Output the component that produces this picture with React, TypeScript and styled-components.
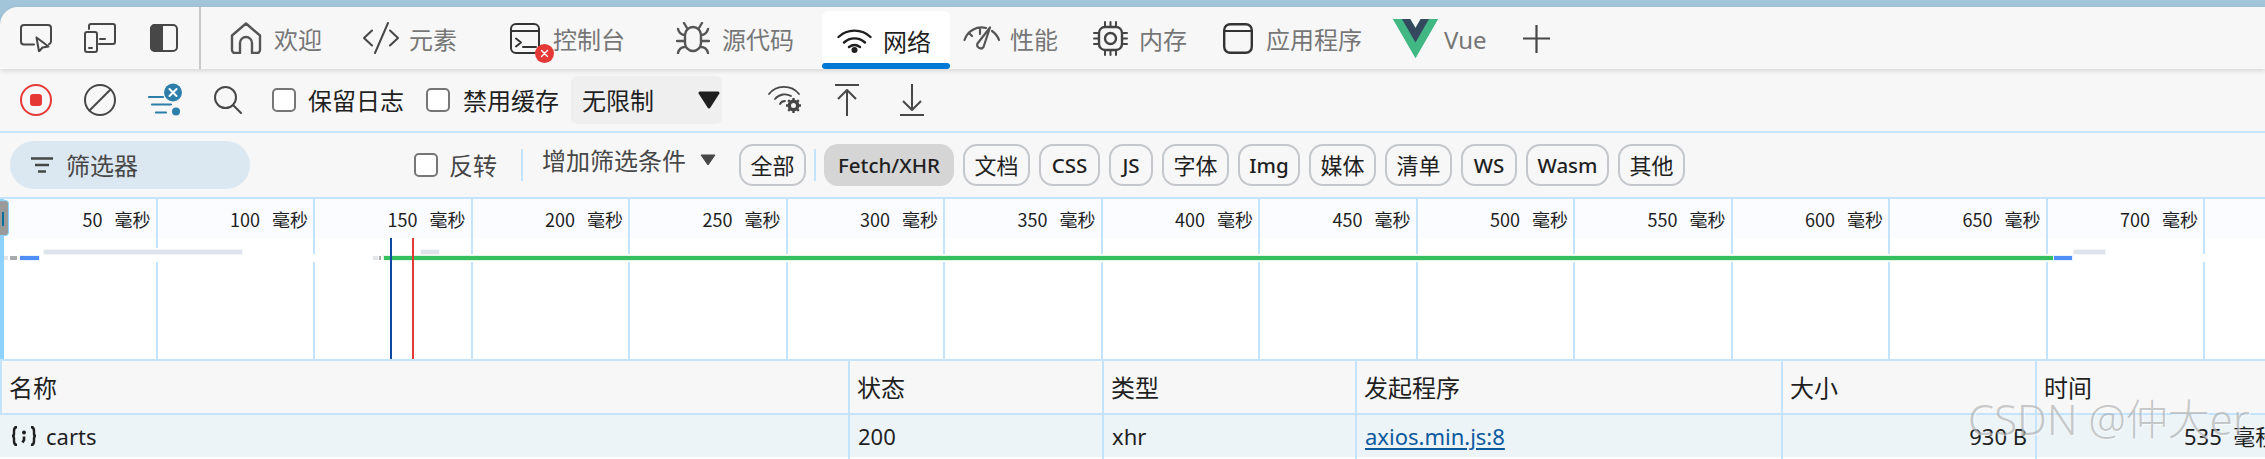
import React from "react";
import styled, { createGlobalStyle } from "styled-components";

const Global = createGlobalStyle`
  html, body { margin: 0; padding: 0; background: #ffffff; }
  body { font-family: "Noto Sans", "Noto Sans CJK SC", sans-serif; overflow: hidden; }
  * { box-sizing: border-box; }
`;

const LINE = "#c4e4fd";

const Page = styled.div`
  position: relative; width: 2265px; height: 459px; overflow: hidden;
  background: #ffffff;
`;
const TopStrip = styled.div`background: #a3c5da; padding-top: 7px; height: 69px;`;
const TabBar = styled.div`
  position: relative; z-index: 2; display: flex; align-items: stretch; height: 62px;
  background: #f7f7f7; border-top-left-radius: 18px;
  box-shadow: 0 2px 5px rgba(0,0,0,.13);
`;
const DeviceTools = styled.div`
  display: flex; align-items: center; width: 201px; padding-left: 20px;
  border-right: 2px solid #c8c8c8;
`;
const IconSlot = styled.span<{ $ml?: number }>`
  display: block; flex: none; line-height: 0; margin-left: ${p => p.$ml ?? 0}px;
  position: relative;
`;
const Tab = styled.div<{ $w: number; $pl: number; $gap: number; $active?: boolean }>`
  position: relative; display: flex; align-items: center; flex: none;
  width: ${p => p.$w}px; padding-left: ${p => p.$pl}px; gap: ${p => p.$gap}px;
  height: ${p => (p.$active ? "58px" : "62px")};
  margin-top: ${p => (p.$active ? "4px" : "0")};
  background: ${p => (p.$active ? "#ffffff" : "transparent")};
  border-radius: ${p => (p.$active ? "6px 6px 0 0" : "0")};
`;
const TabLabel = styled.span<{ $active?: boolean }>`
  font: 400 24px/1 "Noto Sans", "Noto Sans CJK SC", sans-serif;
  color: ${p => (p.$active ? "#1f1f1f" : "#767676")}; white-space: nowrap;
  position: relative; top: 2px;
`;
const Underline = styled.span`
  position: absolute; left: 0; right: 0; bottom: 0; height: 6px;
  background: #0078d4; border-radius: 3px;
`;
const Badge = styled.span`
  position: absolute; left: 25px; top: 21px; width: 19px; height: 19px; border-radius: 50%;
  background: #e53935; color: #fff; display: flex; align-items: center; justify-content: center;
`;

const Toolbar = styled.div`
  display: flex; align-items: center; height: 62px; background: #f7f7f7; padding-left: 20px;
  border: 0;
`;
const Check = styled.span<{ $ml?: number }>`
  display: block; flex: none; width: 24px; height: 24px; margin-left: ${p => p.$ml ?? 0}px;
  border: 2px solid #767676; border-radius: 5px; background: #fff;
`;
const CheckText = styled.span<{ $ml: number; $color?: string; $mb?: number }>`
  flex: none; margin-left: ${p => p.$ml}px; margin-bottom: ${p => p.$mb ?? 0}px;
  font: 400 24px/1 "Noto Sans CJK SC", sans-serif;
  color: ${p => p.$color ?? "#1f1f1f"}; white-space: nowrap;
`;
const Select = styled.div`
  display: flex; align-items: center; justify-content: space-between; flex: none;
  width: 151px; height: 48px; margin-left: 12px; padding: 0 2px 0 11px;
  background: #efefef; border-radius: 6px;
  font: 400 24px/1 "Noto Sans CJK SC", sans-serif; color: #1f1f1f;
`;
const FilterRow = styled.div`
  display: flex; align-items: center; height: 66px; background: #f7f7f7; padding: 0 0 0 10px;
  border-top: 2px solid ${LINE};
`;
const Pill = styled.div`
  display: flex; align-items: center; gap: 13px; flex: none; width: 240px; height: 48px;
  padding-left: 21px; border-radius: 24px; background: #dce8f1;
  font: 400 24px/1 "Noto Sans CJK SC", sans-serif; color: #474747;
`;
const VLine = styled.span<{ $ml: number; $h: number }>`
  display: block; flex: none; width: 2px; height: ${p => p.$h}px; margin-left: ${p => p.$ml}px;
  background: ${LINE};
`;
const Chips = styled.div`display: flex; align-items: center; gap: 9px; margin-left: 23px;`;
const Chip = styled.span<{ $w: number; $on?: boolean; $cjk?: boolean }>`
  display: flex; align-items: center; justify-content: center; flex: none;
  width: ${p => p.$w}px; height: 42px; border-radius: 14px;
  border: 2px solid ${p => (p.$on ? "#d5d5d5" : "#c4c7cb")};
  background: ${p => (p.$on ? "#d5d5d5" : "transparent")};
  font: ${p => (p.$cjk ? "400 22px" : "500 20.5px")}/1 "Noto Sans", "Noto Sans CJK SC", sans-serif;
  color: #1f1f1f; white-space: nowrap;
`;
const ChipRule = styled.span`display: block; width: 2px; height: 32px; background: ${LINE}; margin: 0 -1px;`;

const Timeline = styled.div`
  position: relative; height: 164px; border-top: 2px solid ${LINE};
  border-bottom: 2px solid ${LINE}; background: #fff; overflow: hidden;
`;
const TimeHeader = styled.div`display: flex; height: 39px; background: #fafcff;`;
const TimeCell = styled.div<{ $last?: boolean }>`
  flex: ${p => (p.$last ? "1" : "0 0 157.5px")};
  border-right: ${p => (p.$last ? "0" : `2px solid ${LINE}`)};
  padding: 6px 5px 0 0; text-align: right; white-space: pre; word-spacing: 2px;
  font: 400 18px/28px "Noto Sans CJK SC", sans-serif; color: #1f1f1f;
`;
const ChartRows = styled.div`display: flex; height: 121px;`;
const ChartCell = styled.div<{ $last?: boolean }>`
  flex: ${p => (p.$last ? "1" : "0 0 157.5px")};
  border-right: ${p => (p.$last ? "0" : `2px solid ${LINE}`)};
`;
const LeftEdge = styled.div`
  position: absolute; left: 0; top: 0; bottom: 0; width: 4px; background: #8dd2fc;
`;
const Handle = styled.div`
  position: absolute; left: 0; top: 1px; width: 9px; height: 36px;
  background: #9a9a9a; border: 1px solid #8dd2fc; border-left: 0; border-radius: 0 4px 4px 0;
  &::after {
    content: ""; position: absolute; left: 2px; top: 11px; width: 2px; height: 14px; background: #0a6f9a;
  }
`;
const RowMask = styled.div`
  position: absolute; left: 4px; right: 0; top: 55px; height: 8px; background: #ffffff;
`;
const Bar = styled.div<{ $x: number; $w: number; $y: number; $h: number; $c: string; $halo?: string }>`
  position: absolute; left: ${p => p.$x}px; width: ${p => p.$w}px;
  top: ${p => p.$y - 199}px; height: ${p => p.$h}px; background: ${p => p.$c};
  ${p => (p.$halo ? `box-shadow: 0 0 0 1px ${p.$halo};` : "")}
`;
const UpperBar = styled(Bar)`
  box-shadow: 0 0 0 1px #f4f6f8, 0 0 0 2px #ffffff;
`;
const Marker = styled.div<{ $x: number; $c: string }>`
  position: absolute; left: ${p => p.$x}px; top: 39px; bottom: 0; width: 2px; background: ${p => p.$c};
`;

const TableHead = styled.div`
  display: grid; grid-template-columns: 848px 254px 253px 426px 254px 1fr;
  height: 54px; background: #f7f7f7; border-left: 2px solid ${LINE}; border-bottom: 2px solid ${LINE};
`;
const HeadCell = styled.div`
  display: flex; align-items: center; padding-left: 7px; border-right: 2px solid ${LINE};
  font: 400 24px/1 "Noto Sans CJK SC", sans-serif; color: #1f1f1f;
  &:last-child { border-right: 0; }
`;
const TableRow = styled.div`
  display: grid; grid-template-columns: 850px 254px 253px 426px 254px 1fr;
  height: 44px; background: linear-gradient(#edf4f8 42px, #ffffff 42px);
`;
const RowCell = styled.div<{ $right?: boolean; $pl?: number }>`
  display: flex; align-items: center; height: 44px; padding-bottom: 2px;
  padding-left: ${p => p.$pl ?? 8}px; padding-right: ${p => (p.$right ? "8px" : "0")};
  justify-content: ${p => (p.$right ? "flex-end" : "flex-start")};
  border-right: 2px solid ${LINE}; white-space: pre; overflow: hidden;
  font: 400 22px/1 "Noto Sans", "Noto Sans CJK SC", sans-serif; color: #1f1f1f;
  &:last-child { border-right: 0; }
`;
const ReqName = styled.span`display: flex; align-items: center; gap: 9px;`;
const Link = styled.span`
  color: #0b5a9e; text-decoration: underline; text-decoration-thickness: 2px; text-underline-offset: 3px;
`;
const Watermark = styled.div`
  position: absolute; left: 1968px; top: 391px; white-space: nowrap;
  font: 300 42px/56px "Noto Sans", "Noto Sans CJK SC", sans-serif;
  color: rgba(130,130,130,.42); text-shadow: 1px 1px 0 rgba(255,255,255,.55);
`;

const G = "#474747";
const S = { fill: "none", stroke: G, strokeWidth: 2, strokeLinecap: "round", strokeLinejoin: "round" } as const;

const tabs: { w: number; pl: number; gap: number; label: string; icon: React.ReactNode; active?: boolean; badge?: boolean }[] = [
  { w: 147, pl: 29, gap: 12, label: "欢迎", icon: (
    <svg width="32" height="32" viewBox="0 0 32 32"><path {...S} strokeWidth={2.4} stroke="#555" d="M2 13.5 16 1.5l14 12V28a3 3 0 0 1-3 3h-5V21a6 6 0 0 0-12 0v10H5a3 3 0 0 1-3-3z" /></svg>) },
  { w: 147, pl: 15, gap: 10, label: "元素", icon: (
    <svg width="36" height="32" viewBox="0 0 36 32"><path {...S} d="M9 8.5 1 16l8 7.5M25 1 12 31M27 8.5l8 7.5-8 7.5" /></svg>) },
  { w: 166, pl: 15, gap: 13, label: "控制台", badge: true, icon: (
    <svg width="30" height="31" viewBox="0 0 30 31"><rect {...S} stroke="#333" x="1" y="1" width="28" height="29" rx="5" /><path {...S} stroke="#333" d="M1 8h28M6 15.5l5 4-5 4M13 24h13" /></svg>) },
  { w: 161, pl: 15, gap: 12, label: "源代码", icon: (
    <svg width="34" height="32" viewBox="0 0 34 32"><path {...S} strokeWidth={2.4} stroke="#555" d="M9 13a8 8 0 0 1 16 0v8a8 8 0 0 1-16 0zM11 6 8 1M23 6l3-5M9 13c-4 0-6-2-7-6M25 13c4 0 6-2 7-6M9 19H1M25 19h8M9 25c-4 0-6 2-7 6M25 25c4 0 6 2 7 6" /></svg>) },
  { w: 128, pl: 15, gap: 11, label: "网络", active: true, icon: (
    <svg width="35" height="25" viewBox="0 0 35 25"><path fill="none" stroke="#1f1f1f" strokeWidth="2.4" strokeLinecap="round" d="M1.5 9C10 .5 25 .5 33.5 9M7 14.5c6-5.5 15-5.500 21 0M12 19c3.500-2.500 7.500-2.500 11 0" /><circle cx="17.500" cy="22" r="3" fill="#1f1f1f" /></svg>) },
  { w: 128, pl: 13, gap: 10, label: "性能", icon: (
    <svg width="37" height="25" viewBox="0 0 37 25"><path {...S} strokeWidth={2.2} stroke="#555" d="M1.500 14A18 18 0 0 1 23 2M29 5a18 18 0 0 1 7 9M17 2v6M6 7l3 3M27 1.500 20.500 21a3.500 3.500 0 0 1-6-3.500z" /></svg>) },
  { w: 130, pl: 15, gap: 11, label: "内存", icon: (
    <svg width="35" height="35" viewBox="0 0 35 35"><rect {...S} strokeWidth={2.4} stroke="#444" x="6" y="6" width="23" height="23" rx="6" /><circle {...S} strokeWidth={2.4} stroke="#444" cx="17.500" cy="17.500" r="5.500" /><path {...S} stroke="#444" d="M12 1v4M17.500 1v4M23 1v4M12 30v4M17.500 30v4M23 30v4M1 12h4M1 17.500h4M1 23h4M30 12h4M30 17.500h4M30 23h4" /></svg>) },
  { w: 170, pl: 15, gap: 13, label: "应用程序", icon: (
    <svg width="30" height="31" viewBox="0 0 30 31"><rect {...S} strokeWidth={2.4} stroke="#333" x="1.200" y="1.200" width="27.600" height="28.600" rx="6" /><path {...S} strokeWidth={2} stroke="#333" d="M1.500 8h27" /></svg>) },
  { w: 130, pl: 15, gap: 6, label: "Vue", icon: (
    <svg width="45" height="39" viewBox="0 0 256 221"><path fill="#41B883" d="M204.800 0H256L128 220.800 0 0h97.920L128 51.200 157.440 0z" /><path fill="#41B883" d="m0 0 128 220.800L256 0h-51.200L128 132.480 50.560 0z" /><path fill="#35495E" d="M50.560 0 128 133.120 204.800 0h-47.360L128 51.200 97.920 0z" /></svg>) },
];

const times = [50, 100, 150, 200, 250, 300, 350, 400, 450, 500, 550, 600, 650, 700];
const chips: { t: string; w: number; on?: boolean; cjk?: boolean }[] = [
  { t: "Fetch/XHR", w: 130, on: true }, { t: "文档", w: 67, cjk: true }, { t: "CSS", w: 61 }, { t: "JS", w: 44 },
  { t: "字体", w: 67, cjk: true }, { t: "Img", w: 62 }, { t: "媒体", w: 67, cjk: true }, { t: "清单", w: 67, cjk: true },
  { t: "WS", w: 56 }, { t: "Wasm", w: 83 }, { t: "其他", w: 67, cjk: true },
];

export default function App() {
  return (
    <Page>
      <Global />
      <TopStrip>
        <TabBar>
          <DeviceTools>
            <IconSlot>
              <svg width="32" height="28" viewBox="0 0 32 28"><path {...S} d="M14 20.500H4a3 3 0 0 1-3-3V4a3 3 0 0 1 3-3h24a3 3 0 0 1 3 3v13.500a3 3 0 0 1-2 2.600" /><path {...S} d="m16.500 13.500 12 9-6 1-3.500 4z" /></svg>
            </IconSlot>
            <IconSlot $ml={32}>
              <svg width="32" height="30" viewBox="0 0 32 30"><rect {...S} x="1" y="9" width="12" height="20" rx="2" /><path {...S} d="M5 6V3a2 2 0 0 1 2-2h22a2 2 0 0 1 2 2v16a2 2 0 0 1-2 2H15M16 16h5M5 25h3" /></svg>
            </IconSlot>
            <IconSlot $ml={34}>
              <svg width="28" height="28" viewBox="0 0 28 28"><rect {...S} x="1" y="1" width="26" height="26" rx="4" /><path fill={G} d="M5 0h8v28H5a5 5 0 0 1-5-5V5a5 5 0 0 1 5-5z" /></svg>
            </IconSlot>
          </DeviceTools>
          {tabs.map(t => (
            <Tab key={t.label} $w={t.w} $pl={t.pl} $gap={t.gap} $active={t.active}>
              <IconSlot>
                {t.icon}
                {t.badge && (
                  <Badge>
                    <svg width="9" height="9" viewBox="0 0 9 9"><path d="m1.500 1.500 6 6m0-6-6 6" stroke="#fff" strokeWidth="1.400" strokeLinecap="round" /></svg>
                  </Badge>
                )}
              </IconSlot>
              <TabLabel $active={t.active}>{t.label}</TabLabel>
              {t.active && <Underline />}
            </Tab>
          ))}
          <IconSlot $ml={15}>
            <svg width="27" height="62" viewBox="0 0 27 62"><path fill="none" stroke={G} strokeWidth="2.200" d="M13.500 18v28M0 31.500h27" /></svg>
          </IconSlot>
        </TabBar>
      </TopStrip>

      <Toolbar>
        <IconSlot>
          <svg width="32" height="32" viewBox="0 0 32 32"><circle cx="16" cy="16" r="15" fill="none" stroke="#e53935" strokeWidth="2" /><rect x="10" y="10" width="12" height="12" rx="3" fill="#e53935" /></svg>
        </IconSlot>
        <IconSlot $ml={32}>
          <svg width="32" height="32" viewBox="0 0 32 32"><circle {...S} cx="16" cy="16" r="15" /><path {...S} d="M5.500 26.500 26.500 5.500" /></svg>
        </IconSlot>
        <IconSlot $ml={32}>
          <svg width="34" height="34" viewBox="0 0 34 34"><path fill="none" stroke="#2d7fa9" strokeWidth="2.200" strokeLinecap="round" d="M1 14h14M4 21.500h19M8 29.500h10" /><circle cx="28" cy="28.500" r="4" fill="#2d7fa9" /><circle cx="25" cy="9.500" r="9" fill="#2d7fa9" /><path d="m21.500 6 7 7m0-7-7 7" stroke="#fff" strokeWidth="2" strokeLinecap="round" /></svg>
        </IconSlot>
        <IconSlot $ml={32}>
          <svg width="28" height="28" viewBox="0 0 28 28"><circle {...S} cx="11.500" cy="11.500" r="10.500" /><path {...S} d="M19 19l8 8" /></svg>
        </IconSlot>
        <Check $ml={30} />
        <CheckText $ml={12}>保留日志</CheckText>
        <Check $ml={22} />
        <CheckText $ml={13}>禁用缓存</CheckText>
        <Select>
          无限制
          <svg width="22" height="18" viewBox="0 0 22 18"><path d="M2 2h18L11 16z" fill="#1f1f1f" stroke="#1f1f1f" strokeWidth="3" strokeLinejoin="round" /></svg>
        </Select>
        <IconSlot $ml={46}>
          <svg width="35" height="30" viewBox="0 0 35 30"><path {...S} strokeWidth={1.800} d="M1 9C8 0 23-1 31 9M7 14c4-5 11-6 16-3M12 19c1-2 3-3 5-3" /><circle cx="25.500" cy="20.500" r="4.200" fill="none" stroke={G} strokeWidth="3.400" /><path fill="none" stroke={G} strokeWidth="2.400" d="M25.500 13v2.500M25.500 25.500V28M18 20.500h2.500M30.500 20.500H33M20.200 15.200l1.800 1.800M29 24l1.800 1.800M30.800 15.200 29 17M22 24l-1.800 1.800" /></svg>
        </IconSlot>
        <IconSlot $ml={32}>
          <svg width="24" height="32" viewBox="0 0 24 32"><path {...S} strokeLinecap="butt" d="M0 1h24M12 32V7M3 15l9-9 9 9" /></svg>
        </IconSlot>
        <IconSlot $ml={41}>
          <svg width="24" height="32" viewBox="0 0 24 32"><path {...S} strokeLinecap="butt" d="M0 31h24M12 0v25M3 17l9 9 9-9" /></svg>
        </IconSlot>
      </Toolbar>

      <FilterRow>
        <Pill>
          <svg width="22" height="16" viewBox="0 0 22 16"><path fill="none" stroke="#444746" strokeWidth="2.400" d="M0 1.500h22M4 8h14M7 14.500h8" /></svg>
          筛选器
        </Pill>
        <Check $ml={164} />
        <CheckText $ml={11} $color="#474747">反转</CheckText>
        <VLine $ml={24} $h={32} />
        <CheckText $ml={19} $mb={10} $color="#474747">增加筛选条件</CheckText>
        <IconSlot $ml={14}>
          <svg width="16" height="22" viewBox="0 0 16 22"><path d="M1 1h14L8 11z" fill="#474747" stroke="#474747" strokeLinejoin="round" /></svg>
        </IconSlot>
        <Chips>
          <Chip $w={67} $cjk>全部</Chip>
          <ChipRule />
          {chips.map(c => <Chip key={c.t} $w={c.w} $on={c.on} $cjk={c.cjk}>{c.t}</Chip>)}
        </Chips>
      </FilterRow>

      <Timeline>
        <TimeHeader>
          {times.map(t => <TimeCell key={t}>{t}  毫秒</TimeCell>)}
          <TimeCell $last />
        </TimeHeader>
        <ChartRows>
          {times.map(t => <ChartCell key={t} />)}
          <ChartCell $last />
        </ChartRows>
        <LeftEdge />
        <Handle />
        <RowMask />
        <UpperBar $x={44} $w={198} $y={250} $h={4} $c="#dce3ea" />
        <UpperBar $x={421} $w={18} $y={250} $h={4} $c="#dce3ea" />
        <UpperBar $x={2074} $w={31} $y={250} $h={4} $c="#dce3ea" />
        <Bar $x={4} $w={4} $y={256} $h={4} $c="#e2e5e8" />
        <Bar $x={10} $w={7} $y={256} $h={4} $c="#a8abae" />
        <Bar $x={20} $w={19} $y={256} $h={4} $c="#4f8ff7" $halo="#eaf2fe" />
        <Bar $x={373} $w={5} $y={256} $h={4} $c="#e2e5e8" />
        <Bar $x={379} $w={2} $y={256} $h={4} $c="#a8abae" />
        <Bar $x={384} $w={1669} $y={256} $h={4} $c="#34c05f" $halo="#e2f5e8" />
        <Bar $x={2054} $w={18} $y={256} $h={4} $c="#4f8ff7" $halo="#eaf2fe" />
        <Marker $x={390} $c="#0d47a1" />
        <Marker $x={412} $c="#e53935" />
      </Timeline>

      <TableHead>
        <HeadCell>名称</HeadCell>
        <HeadCell>状态</HeadCell>
        <HeadCell>类型</HeadCell>
        <HeadCell>发起程序</HeadCell>
        <HeadCell>大小</HeadCell>
        <HeadCell>时间</HeadCell>
      </TableHead>
      <TableRow>
        <RowCell $pl={11}>
          <ReqName>
            <svg width="26" height="20" viewBox="0 0 26 20"><path fill="none" stroke="#1f1f1f" strokeWidth="2.400" d="M6 1C3 1 3 3 3 5v3c0 1-1 2-2 2 1 0 2 1 2 2v3c0 2 0 4 3 4M20 1c3 0 3 2 3 4v3c0 1 1 2 2 2-1 0-2 1-2 2v3c0 2 0 4-3 4" /><circle cx="13" cy="6.500" r="2" fill="#1f1f1f" /><path fill="none" stroke="#1f1f1f" strokeWidth="2.600" d="M13 10.500V14l-1.500 2.500" /></svg>
            carts
          </ReqName>
        </RowCell>
        <RowCell>200</RowCell>
        <RowCell>xhr</RowCell>
        <RowCell><Link>axios.min.js:8</Link></RowCell>
        <RowCell $right>930 B</RowCell>
        <RowCell $pl={147}>535  毫秒</RowCell>
      </TableRow>
      <Watermark>CSDN @仲大er</Watermark>
    </Page>
  );
}
